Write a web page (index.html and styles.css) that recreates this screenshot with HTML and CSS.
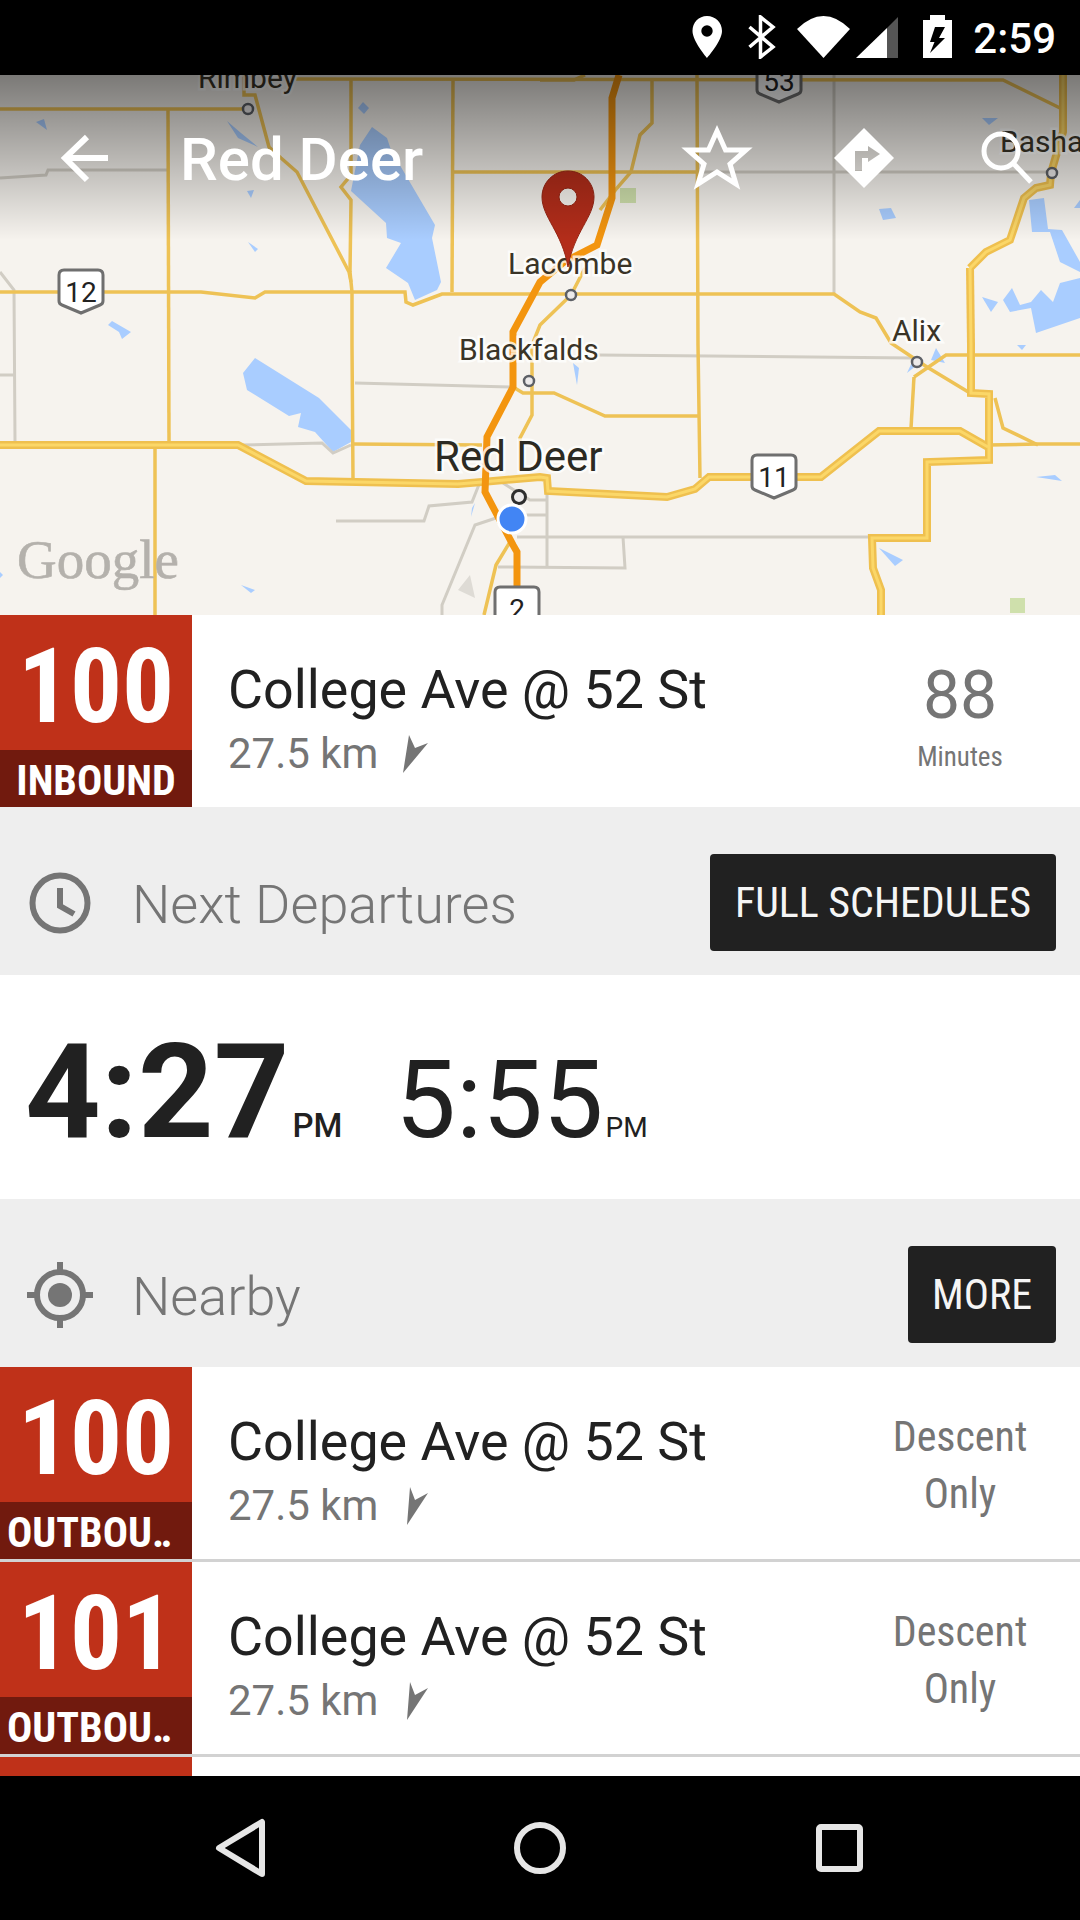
FILE: index.html
```html
<!DOCTYPE html>
<html lang="en">
<head>
    <meta charset="UTF-8">
    <meta name="viewport" content="width=device-width, initial-scale=1.0">
    <title>Red Deer</title>
    <link rel="stylesheet" href="styles.css">
</head>
<body>
    <header class="status-bar">
        <svg class="status-icons" width="262" height="44" viewBox="692 15 262 44">
            <path fill-rule="evenodd" d="M707 16C698.700 16 692.500 22.500 692.500 31C692.500 41 707 58 707 58C707 58 722 41 722 31C722 22.500 715.300 16 707 16ZM707 25.300A5.700 5.700 0 1 1 707 36.700A5.700 5.700 0 1 1 707 25.300Z"/>
            <path class="bt" d="M749.500 27L773 47L760.500 57V17L773 27L749.500 47"/>
            <path d="M797 29Q823.500 3 850 29L823.500 58Z"/>
            <polygon class="signal-off" points="887,28 898,17 898,58 887,58"/>
            <polygon points="856,58 887,28 887,58"/>
            <path fill-rule="evenodd" d="M930 15H945V20H952V58H923V20H930ZM935 27L930 42H934.500L930 53L945 38H939L945 27Z"/>
        </svg>
        <span class="clock">2:59</span>
    </header>

    <section class="map">
        <svg class="map-canvas" width="1080" height="540" viewBox="0 75 1080 540">
            <g class="water">
                <polygon points="372,127 387,138 391,150 435,225 432,238 441,282 437,290 415,300 408,283 386,268 401,243 387,238 386,223 351,191 360,145"/>
                <polygon points="255,358 319,398 351,430 351,442 333,452 315,432 298,427 301,413 289,416 247,390 243,373"/>
                <polygon points="36,122 44,119 47,130"/>
                <polygon points="358,108 363,102 369,108 364,114"/>
                <polygon points="227,121 241,133 258,147 238,138"/>
                <polygon points="247,191 254,190 251,198"/>
                <polygon points="248,242 258,249 255,252"/>
                <polygon points="108,325 112,321 131,332 122,339 119,332"/>
                <polygon points="241,585 255,590 251,593"/>
                <polygon points="0,572 3,575 0,578"/>
                <polygon points="475,503 471,517 472,508"/>
                <polygon points="879,209 891,208 896,218 883,220"/>
                <polygon points="982,118 998,118 989,125"/>
                <polygon points="1029,200 1044,198 1048,229 1062,230 1080,262 1080,272 1072,268 1060,262 1050,232 1032,232"/>
                <polygon points="1080,278 1060,283 1053,302 1041,290 1031,302 1020,305 1012,288 1003,300 1010,312 1031,308 1036,333 1080,318"/>
                <polygon points="982,297 998,302 991,312"/>
                <polygon points="1080,200 1074,208 1080,208"/>
                <polygon points="573,363 579,368 577,385"/>
                <polygon points="936,348 945,363 931,360"/>
                <polygon points="907,373 914,358 917,365"/>
                <polygon points="1017,345 1026,345 1022,350"/>
                <polygon points="1036,477 1055,475 1062,481"/>
                <polygon points="879,548 903,560 895,566"/>
            </g>
            <rect class="park" x="620" y="188" width="16" height="15"/>
            <rect class="park" x="1010" y="598" width="15" height="15"/>
            <polygon class="urban" points="458,590 470,575 475,598"/>

            <g class="minor">
                <polyline points="0,178 46,175 48,170 167,170"/>
                <polyline points="0,272 14,290 15,442"/>
                <polyline points="0,375 15,375"/>
                <polyline points="355,383 513,387"/>
                <polyline points="598,355 912,358"/>
                <polyline points="241,445 322,443 333,453 351,445"/>
                <polyline points="336,521 424,521 429,506 472,502 480,482"/>
                <polyline points="496,518 475,525 442,605 442,615"/>
                <polyline points="547,493 547,567"/>
                <polyline points="517,537 871,537"/>
                <polyline points="623,537 625,568 498,567"/>
                <polyline points="503,483 530,500 547,500"/>
                <polyline points="500,515 547,515"/>
                <polyline points="697,172 1052,172"/>
                <polyline points="834,75 834,293"/>
            </g>

            <g class="road">
                <polyline points="296,79 1003,80 1060,108"/>
                <polyline points="540,80 574,80 585,75"/>
                <polyline points="0,109 248,109"/>
                <polyline points="168,109 169,442"/>
                <polyline points="155,445 155,615"/>
                <polyline points="244,75 244,95 255,95 269,147 281,158 297,172 349,272 351,282"/>
                <polyline points="351,79 351,175 341,187 351,200 350,272 352,292 352,345 353,478"/>
                <polyline points="453,79 452,292"/>
                <polyline points="453,172 697,172"/>
                <polyline points="0,292 201,292 255,298 265,292 405,292 406,302 413,305 442,294 834,294 860,312 876,318 891,343 927,367 970,393 988,394"/>
                <polyline points="652,78 652,123 640,135 631,172 617,188 600,210"/>
                <polyline points="697,75 698,345 700,478"/>
                <polyline points="540,393 554,393 605,416 698,416"/>
                <polyline points="513,387 523,393 540,393"/>
                <polyline points="585,268 571,295 540,325 532,345 532,415 520,438 520,470"/>
                <polyline points="510,542 496,565 484,615"/>
                <polyline points="353,444 482,445"/>
                <polyline points="914,377 946,355 1080,355"/>
                <polyline points="914,377 911,428"/>
                <polyline points="988,445 1038,444 1080,444"/>
                <polyline points="995,398 1003,428 1038,445"/>
            </g>

            <defs>
                <polyline id="hw-main" points="0,445 238,445 306,481 458,484 482,482 540,477 547,478 548,491 667,497 695,489 709,477 821,477 879,431 960,431 988,447"/>
                <polyline id="hw-east" points="970,268 986,252 1010,240 1024,198 1036,188 1050,185 1051,173 1063,132 1063,75"/>
                <polyline id="hw-south" points="971,345 971,393 989,394 989,460 927,462 927,538 872,538 873,568 881,590 881,615"/>
                <polyline id="hw-north" points="970,268 971,345"/>
                <path id="shield" d="M6 2H40Q45 2 45 7V33Q45 36 42 37L23 45L4 37Q1 36 1 33V7Q1 2 6 2Z"/>
            </defs>
            <g class="highway">
                <use href="#hw-main"/><use href="#hw-east"/><use href="#hw-south"/><use href="#hw-north"/>
            </g>
            <g class="highway-core">
                <use href="#hw-main"/><use href="#hw-east"/><use href="#hw-south"/><use href="#hw-north"/>
            </g>

            <polyline class="route" points="619,75 612,98 612,198 597,245 564,262 540,282 513,332 513,387 487,437 485,492 513,545 517,552 517,615"/>

            <g class="place">
                <text x="198" y="88">Rimbey</text>
                <text x="508" y="274">Lacombe</text>
                <text x="459" y="360">Blackfalds</text>
                <text x="892" y="341">Alix</text>
                <text x="1000" y="152">Bashaw</text>
                <text class="place-big" x="434" y="471">Red Deer</text>
            </g>
            <text class="google" x="17" y="578">Google</text>

            <g class="town">
                <circle cx="248" cy="109" r="5"/>
                <circle cx="571" cy="295" r="5"/>
                <circle cx="529" cy="381" r="5"/>
                <circle cx="917" cy="362" r="5"/>
                <circle cx="1052" cy="173" r="5"/>
                <circle class="town-big" cx="519" cy="497" r="6.500"/>
            </g>

            <g class="road-sign">
                <g transform="translate(58 268)"><use href="#shield"/><text x="23" y="34">12</text></g>
                <g transform="translate(756 57)"><use href="#shield"/><text x="23" y="34">53</text></g>
                <g transform="translate(751 453)"><use href="#shield"/><text x="23" y="34">11</text></g>
                <g transform="translate(494 585)"><use href="#shield"/><text x="23" y="34">2</text></g>
            </g>

            <path class="pin" fill-rule="evenodd" d="M568 171C553 171 542 183 542 197C542 217 562 232 568 267C574 232 594 217 594 197C594 183 583 171 568 171ZM568 188A9 9 0 1 1 568 206A9 9 0 1 1 568 188Z"/>
            <circle class="my-spot" cx="512" cy="519" r="14"/>
        </svg>
        <div class="map-shade"></div>
        <div class="toolbar">
            <svg class="back" width="56" height="54" viewBox="57 131 56 54">
                <path d="M108 158H64M87 137L65 158L87 180"/>
            </svg>
            <h1>Red Deer</h1>
            <svg class="outline" width="76" height="74" viewBox="679 124 76 74">
                <polygon points="717,134 725.500,153 746,153 730,167 736,187 717,175 698,187 704,167 688,153 708.500,153"/>
            </svg>
            <svg class="solid" width="64" height="64" viewBox="832 127 64 64">
                <path fill-rule="evenodd" d="M864 129L894 159L864 189L834 159ZM855 172H862V159H868V163L880 155L868 147V152H855Z"/>
            </svg>
            <svg class="outline" width="54" height="58" viewBox="980 130 54 58">
                <circle cx="1001" cy="152" r="17"/>
                <path d="M1013 164L1031 183"/>
            </svg>
        </div>
    </section>

    <main class="content">
        <div class="stop">
            <div class="badge">
                <div class="badge-num"><span class="narrow">100</span></div>
                <div class="badge-dir"><span class="narrow">INBOUND</span></div>
            </div>
            <div class="stop-info">
                <div class="stop-name">College Ave @ 52 St</div>
                <div class="stop-dist">27.5 km
                    <svg class="heading" width="26" height="40" viewBox="0 0 26 40"><polygon points="6,1 12,14 25,9 0,39"/></svg>
                </div>
            </div>
            <div class="stop-time">
                <div class="minutes">88</div>
                <div class="minutes-label"><span class="narrow">Minutes</span></div>
            </div>
        </div>

        <div class="section-head">
            <svg class="section-icon" width="66" height="66" viewBox="0 0 66 66">
                <circle class="ring" cx="33" cy="33" r="27.500"/>
                <path class="ring" d="M33 18V36L47 44"/>
            </svg>
            <h2>Next Departures</h2>
            <a class="btn btn-wide"><span class="narrow">FULL SCHEDULES</span></a>
        </div>

        <div class="departures">
            <span class="time-next">4:27</span><span class="ampm-next">PM</span>
            <span class="time-later">5:55</span><span class="ampm-later">PM</span>
        </div>

        <div class="section-head">
            <svg class="section-icon" width="66" height="66" viewBox="0 0 66 66">
                <circle class="ring" cx="33" cy="33" r="23"/>
                <circle class="dot" cx="33" cy="33" r="12"/>
                <path class="ring" d="M33 0V10M33 56V66M0 33H10M56 33H66"/>
            </svg>
            <h2>Nearby</h2>
            <a class="btn btn-more"><span class="narrow">MORE</span></a>
        </div>

        <div class="stop stop-line">
            <div class="badge">
                <div class="badge-num"><span class="narrow">100</span></div>
                <div class="badge-dir badge-dir-long"><span class="narrow">OUTBOU‥</span></div>
            </div>
            <div class="stop-info">
                <div class="stop-name">College Ave @ 52 St</div>
                <div class="stop-dist">27.5 km
                    <svg class="heading" width="26" height="40" viewBox="0 0 26 40"><polygon points="7,1 12,14 25,7 4,39"/></svg>
                </div>
            </div>
            <div class="stop-time">
                <div class="descent"><span class="narrow">Descent</span></div>
                <div class="descent"><span class="narrow">Only</span></div>
            </div>
        </div>

        <div class="stop stop-line">
            <div class="badge">
                <div class="badge-num"><span class="narrow">101</span></div>
                <div class="badge-dir badge-dir-long"><span class="narrow">OUTBOU‥</span></div>
            </div>
            <div class="stop-info">
                <div class="stop-name">College Ave @ 52 St</div>
                <div class="stop-dist">27.5 km
                    <svg class="heading" width="26" height="40" viewBox="0 0 26 40"><polygon points="7,1 12,14 25,7 4,39"/></svg>
                </div>
            </div>
            <div class="stop-time">
                <div class="descent"><span class="narrow">Descent</span></div>
                <div class="descent"><span class="narrow">Only</span></div>
            </div>
        </div>

        <div class="stop">
            <div class="badge"></div>
        </div>
    </main>

    <footer class="nav-bar">
        <svg class="nav-icons" width="1080" height="144" viewBox="0 1776 1080 144">
            <path d="M262 1822V1874L219 1848Z"/>
            <circle cx="540" cy="1848" r="23"/>
            <rect x="819" y="1827" width="41" height="42" rx="2"/>
        </svg>
    </footer>
</body>
</html>
```

FILE: styles.css
```css
* {
    box-sizing: border-box;
}
html, body {
    margin: 0;
    padding: 0;
}
body {
    width: 1080px;
    height: 1920px;
    display: flex;
    flex-direction: column;
    overflow: hidden;
    font-family: Roboto, "Liberation Sans", sans-serif;
    background: #fff;
    color: #212121;
}

/* status bar */
.status-bar {
    height: 75px;
    flex: none;
    background: #000;
    color: #fff;
    display: flex;
    justify-content: flex-end;
    align-items: flex-start;
    padding: 15px 24px 0 0;
}
.status-icons {
    fill: #fff;
}
.status-icons .bt {
    fill: none;
    stroke: #fff;
    stroke-width: 3.5;
}
.status-icons .signal-off {
    fill: #555;
}
.clock {
    margin-left: 19px;
    font-size: 42px;
    font-weight: 500;
    line-height: 47px;
}

/* map */
.map {
    position: relative;
    height: 540px;
    flex: none;
    overflow: hidden;
    background: #f6f3ee;
}
.map-canvas {
    display: block;
}
.water {
    fill: #a9cdff;
}
.park {
    fill: #cfe0ac;
}
.urban {
    fill: #dedbd5;
}
.minor polyline {
    fill: none;
    stroke: #d1cdc4;
    stroke-width: 3;
}
.road polyline {
    fill: none;
    stroke: #eec255;
    stroke-width: 3.5;
}
.highway use {
    fill: none;
    stroke: #efc04f;
    stroke-width: 8;
}
.highway-core use {
    fill: none;
    stroke: #fbd768;
    stroke-width: 3;
}
.route {
    fill: none;
    stroke: #f3950f;
    stroke-width: 7;
}
.place text {
    font-size: 30px;
    fill: #3a3427;
    stroke: rgba(255, 255, 255, 0.75);
    stroke-width: 5;
    paint-order: stroke;
}
.place .place-big {
    font-size: 42px;
    fill: #2c2a22;
}
.google {
    font-family: "Liberation Serif", serif;
    font-size: 55px;
    fill: #b4b1ac;
    stroke: #b4b1ac;
    stroke-width: 0.6;
}
.town circle {
    fill: #eceaea;
    stroke: #5d6066;
    stroke-width: 2.5;
}
.town .town-big {
    stroke: #2e2e2e;
    stroke-width: 3;
}
.road-sign use {
    fill: #fff;
    stroke: #6f6f6f;
    stroke-width: 3;
}
.road-sign text {
    font-size: 28px;
    fill: #222;
    text-anchor: middle;
}
.pin {
    fill: #b32d1a;
    stroke: #982614;
    stroke-width: 1;
}
.my-spot {
    fill: #4285f4;
    stroke: #fff;
    stroke-width: 3;
}
.map-shade {
    position: absolute;
    left: 0;
    top: 0;
    width: 100%;
    height: 165px;
    background: linear-gradient(to bottom, rgba(0, 0, 0, 0.5), rgba(0, 0, 0, 0));
}

/* toolbar lies over the map */
.toolbar {
    position: absolute;
    left: 0;
    top: 46px;
    width: 100%;
    height: 74px;
    display: flex;
    align-items: center;
    padding: 0 46px 0 57px;
}
.toolbar h1 {
    flex: 1;
    margin: 2px 0 0 67px;
    font-size: 60px;
    font-weight: 500;
    color: #fff;
}
.toolbar .back path {
    fill: none;
    stroke: #fff;
    stroke-width: 6;
}
.toolbar .outline {
    fill: none;
    stroke: #fff;
    stroke-width: 5;
}
.toolbar .solid {
    fill: #fff;
    margin: 0 84px 0 77px;
}

/* list */
.content {
    flex: 1;
    min-height: 0;
    overflow: hidden;
}
.narrow {
    display: inline-block;
    font-stretch: 75%;
}
.stop {
    height: 192px;
    display: flex;
    background: #fff;
}
.stop-line {
    height: 195px;
    border-bottom: 3px solid #d2d2d2;
}
.badge {
    width: 192px;
    flex: none;
    background: #bf3119;
    color: #fff;
    font-weight: 700;
    text-align: center;
}
.badge-num {
    height: 135px;
    padding-top: 4px;
    font-size: 103px;
    line-height: 135px;
}
.badge-dir {
    height: 57px;
    padding-top: 2px;
    background: #711a0e;
    font-size: 42px;
    line-height: 57px;
    white-space: nowrap;
}
.badge-dir-long {
    padding-left: 7px;
    text-align: left;
}
.stop-info {
    flex: 1;
    padding: 36px 0 0 36px;
}
.stop-name {
    font-size: 53.800px;
    line-height: 78px;
}
.stop-dist {
    display: flex;
    align-items: center;
    gap: 25px;
    font-size: 42px;
    line-height: 50px;
    color: #757575;
}
.heading {
    fill: #757575;
}
.stop-time {
    width: 190px;
    margin-right: 25px;
    text-align: center;
    color: #757575;
}
.minutes {
    margin-top: 43px;
    font-size: 66px;
    line-height: 76px;
}
.minutes-label {
    margin-top: 4px;
    font-size: 27px;
    line-height: 38px;
}
.descent {
    font-size: 42px;
    line-height: 57px;
}
.descent:first-child {
    margin-top: 41px;
}

/* section headers */
.section-head {
    height: 168px;
    display: flex;
    align-items: center;
    padding: 23px 24px 0 27px;
    background: #eee;
}
.section-icon {
    flex: none;
    fill: none;
}
.section-icon .ring {
    fill: none;
    stroke: #757575;
    stroke-width: 6;
}
.section-icon .dot {
    fill: #757575;
}
.section-head h2 {
    flex: 1;
    margin: 4px 0 0 39px;
    font-size: 54px;
    font-weight: 300;
    color: #757575;
}
.btn {
    height: 97px;
    display: flex;
    align-items: center;
    justify-content: center;
    background: #212121;
    color: #f5f5f5;
    font-size: 42px;
    border-radius: 4px;
}
.btn-wide {
    width: 346px;
}
.btn-more {
    width: 148px;
}

/* departures */
.departures {
    height: 224px;
    display: flex;
    align-items: baseline;
    padding: 5px 0 0 25px;
    line-height: 224px;
}
.time-next {
    font-size: 132px;
    font-weight: 700;
}
.ampm-next {
    margin-left: 3px;
    font-size: 33px;
    font-weight: 500;
}
.time-later {
    margin-left: 53px;
    font-size: 108px;
}
.ampm-later {
    margin-left: 2px;
    font-size: 28px;
}

/* nav bar */
.nav-bar {
    height: 144px;
    flex: none;
    background: #000;
}
.nav-icons {
    display: block;
    fill: none;
    stroke: #e6e6e6;
    stroke-width: 6;
    stroke-linejoin: round;
}
```
